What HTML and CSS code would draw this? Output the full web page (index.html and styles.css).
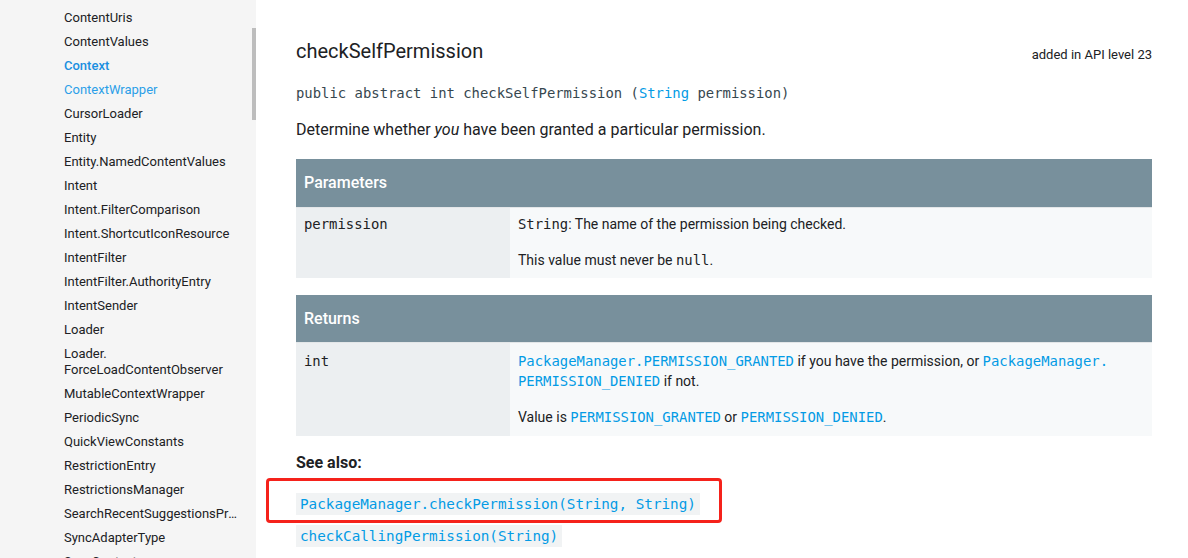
FILE: index.html
```html
<!DOCTYPE html>
<html lang="en">
<head>
<meta charset="utf-8">
<title>checkSelfPermission</title>
<link rel="stylesheet" href="styles.css">
</head>
<body>
<div class="page">
  <nav class="sidebar">
    <ul class="nav-list">
      <li class="nav-item">ContentUris</li>
      <li class="nav-item">ContentValues</li>
      <li class="nav-item active">Context</li>
      <li class="nav-item link">ContextWrapper</li>
      <li class="nav-item">CursorLoader</li>
      <li class="nav-item">Entity</li>
      <li class="nav-item">Entity.NamedContentValues</li>
      <li class="nav-item">Intent</li>
      <li class="nav-item">Intent.FilterComparison</li>
      <li class="nav-item">Intent.ShortcutIconResource</li>
      <li class="nav-item">IntentFilter</li>
      <li class="nav-item">IntentFilter.AuthorityEntry</li>
      <li class="nav-item">IntentSender</li>
      <li class="nav-item">Loader</li>
      <li class="nav-item">Loader.<wbr>ForceLoadContentObserver</li>
      <li class="nav-item">MutableContextWrapper</li>
      <li class="nav-item">PeriodicSync</li>
      <li class="nav-item">QuickViewConstants</li>
      <li class="nav-item">RestrictionEntry</li>
      <li class="nav-item">RestrictionsManager</li>
      <li class="nav-item ellipsis">SearchRecentSuggestionsProvider</li>
      <li class="nav-item">SyncAdapterType</li>
      <li class="nav-item">SyncContext</li>
    </ul>
    <div class="scroll-thumb"></div>
  </nav>

  <main class="content">
    <div class="title-row">
      <h3 class="method-title">checkSelfPermission</h3>
      <span class="api-level">added in API level 23</span>
    </div>
    <p class="signature">public abstract int checkSelfPermission (<a class="code-link">String</a> permission)</p>
    <p class="description">Determine whether <em>you</em> have been granted a particular permission.</p>

    <table class="ref-table">
      <tr><th colspan="2">Parameters</th></tr>
      <tr>
        <td class="key"><code>permission</code></td>
        <td class="val">
          <p><code>String</code>: The name of the permission being checked.</p>
          <p>This value must never be <code>null</code>.</p>
        </td>
      </tr>
    </table>

    <table class="ref-table returns">
      <tr><th colspan="2">Returns</th></tr>
      <tr>
        <td class="key"><code>int</code></td>
        <td class="val">
          <p><a class="code-link">PackageManager.PERMISSION_GRANTED</a> if you have the permission, or <a class="code-link">PackageManager.</a> <a class="code-link">PERMISSION_DENIED</a> if not.</p>
          <p>Value is <a class="code-link">PERMISSION_GRANTED</a> or <a class="code-link">PERMISSION_DENIED</a>.</p>
        </td>
      </tr>
    </table>

    <p class="see-also">See also:</p>
    <ul class="see-list">
      <li class="see-item highlighted"><code class="chip">PackageManager.checkPermission(String, String)</code><span class="red-box"></span></li>
      <li class="see-item"><code class="chip">checkCallingPermission(String)</code></li>
    </ul>
  </main>
</div>
</body>
</html>
```

FILE: styles.css
```css
html, body {
  margin: 0;
  padding: 0;
  height: 100%;
  overflow: hidden;
  background: #fff;
}

body {
  font-family: Roboto, "Noto Sans", Arial, sans-serif;
  color: #202124;
}

.page {
  display: flex;
  height: 558px;
}

.sidebar {
  position: relative;
  width: 256px;
  flex: 0 0 256px;
  background: #f5f5f5;
  overflow: hidden;
}

.nav-list {
  list-style: none;
  margin: 0;
  padding: 6px 0 0 0;
}

.nav-item {
  font-size: 13px;
  line-height: 16px;
  padding: 4px 16px 4px 64px;
  color: #202124;
}

.nav-item.active {
  color: #1a8fe0;
  font-weight: 500;
}

.nav-item.link {
  color: #2b9fe8;
}

.nav-item.ellipsis {
  white-space: nowrap;
  overflow: hidden;
  text-overflow: ellipsis;
}

.scroll-thumb {
  position: absolute;
  right: 0;
  top: 28px;
  width: 4px;
  height: 92px;
  background: #bdbdbd;
}

.content {
  flex: 1;
  padding: 35px 36px 0 40px;
  min-width: 0;
}

.title-row {
  display: flex;
  justify-content: space-between;
  align-items: baseline;
}

.method-title {
  margin: 0;
  font-size: 20px;
  font-weight: 400;
  line-height: 32px;
}

.api-level {
  font-size: 13px;
  color: #202124;
  position: relative;
  top: 1px;
}

.signature {
  margin: 16px 0 0 0;
  font-family: "DejaVu Sans Mono", "Liberation Mono", monospace;
  font-size: 13.9px;
  line-height: 20px;
  color: #37474f;
}

.code-link {
  color: #039be5;
  text-decoration: none;
}

.description {
  margin: 15px 0 0 0;
  font-size: 16px;
  line-height: 24px;
}

.ref-table {
  width: 100%;
  border-collapse: collapse;
  margin-top: 17px;
}

.ref-table th {
  background: #78909c;
  color: #fff;
  font-size: 16px;
  font-weight: 500;
  text-align: left;
  height: 48px;
  padding: 0 8px;
  border-bottom: 1px solid #e3e6e8;
  box-sizing: border-box;
}

.ref-table td {
  vertical-align: top;
  padding: 6px 8px 8px 8px;
  font-size: 14px;
  line-height: 20px;
}

.ref-table.returns td {
  padding: 8px 8px 9px 8px;
}

.ref-table td.key {
  width: 198px;
  background: #eceff1;
}

.ref-table td.val {
  background: #f7f9fa;
}

.ref-table td p {
  margin: 0;
}

.ref-table td p + p {
  margin-top: 16px;
}

.ref-table code,
.ref-table .code-link {
  font-family: "DejaVu Sans Mono", "Liberation Mono", monospace;
  font-size: 13.9px;
}

.ref-table td.key code {
  color: #202124;
}

.see-also {
  margin: 15px 0 0 0;
  font-size: 16px;
  font-weight: 700;
  line-height: 24px;
}

.see-list {
  list-style: none;
  margin: 13px 0 0 0;
  padding: 0;
}

.see-item {
  position: relative;
  line-height: 32px;
}

.chip {
  font-family: "DejaVu Sans Mono", "Liberation Mono", monospace;
  font-size: 14.3px;
  color: #039be5;
  background: #f1f3f4;
  padding: 3px 4px;
}

.red-box {
  position: absolute;
  left: -30px;
  top: -10px;
  width: 456px;
  height: 45px;
  border: 3px solid #f5221b;
  border-radius: 4px;
  box-sizing: border-box;
}
```
